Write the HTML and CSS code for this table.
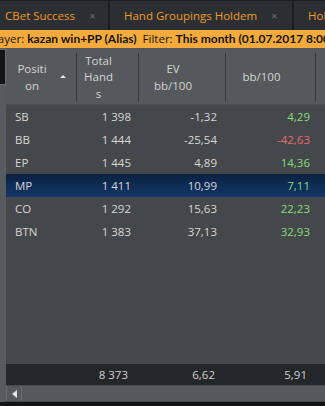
FILE: index.html
```html
<!DOCTYPE html>
<html>
<head>
<meta charset="utf-8">
<link rel="stylesheet" href="styles.css">
</head>
<body>
<div class="app">
  <div class="tabs">
    <div class="tab tab-1"><span class="tab-title">CBet Success</span><span class="close">✕</span></div>
    <div class="tab tab-2"><span class="tab-title">Hand Groupings Holdem</span><span class="close">✕</span></div>
    <div class="tab tab-3"><span class="tab-title">Holdem</span></div>
  </div>
  <div class="filter"><span class="lbl">Player:</span> <b>kazan win+PP (Alias)</b>&nbsp;&nbsp;<span class="lbl">Filter:</span> <b>This month (01.07.2017 8:00 to 31.07.2017 8:00)</b></div>
  <div class="main">
    <div class="side"><div class="side-block"></div></div>
    <div class="grid">
      <div class="head">
        <div class="hc c1"><span class="ht">Position</span><span class="sort"></span></div>
        <div class="hc c2"><span class="ht">Total Hands</span></div>
        <div class="hc c3"><span class="ht ev">EV bb/100</span></div>
        <div class="hc c4"><span class="ht wide">bb/100</span></div>
        <div class="hc c5"></div>
      </div>
      <div class="body">
        <div class="row"><span class="d c1">SB</span><span class="d c2">1 398</span><span class="d c3">-1,32</span><span class="d c4 pos">4,29</span></div>
        <div class="row"><span class="d c1">BB</span><span class="d c2">1 444</span><span class="d c3">-25,54</span><span class="d c4 neg">-42,63</span></div>
        <div class="row"><span class="d c1">EP</span><span class="d c2">1 445</span><span class="d c3">4,89</span><span class="d c4 pos">14,36</span></div>
        <div class="row sel"><span class="d c1">MP</span><span class="d c2">1 411</span><span class="d c3">10,99</span><span class="d c4 pos">7,11</span></div>
        <div class="row"><span class="d c1">CO</span><span class="d c2">1 292</span><span class="d c3">15,63</span><span class="d c4 pos">22,23</span></div>
        <div class="row"><span class="d c1">BTN</span><span class="d c2">1 383</span><span class="d c3">37,13</span><span class="d c4 pos">32,93</span></div>
      </div>
      <div class="total"><span class="d c1"></span><span class="d c2">8 373</span><span class="d c3">6,62</span><span class="d c4">5,91</span></div>
      <div class="hscroll"><div class="sbtn"><span class="arrow"></span></div><div class="track"></div></div>
    </div>
  </div>
</div>
</body>
</html>
```
FILE: styles.css
```css
* { box-sizing: border-box; }
html, body { margin: 0; padding: 0; }
body {
  width: 325px;
  height: 406px;
  overflow: hidden;
  background: #111315;
  font-family: "Open Sans", "Noto Sans", sans-serif;
  font-size: 11.5px;
}
.app { display: flex; flex-direction: column; height: 402px; }

.tabs {
  display: flex;
  height: 30px;
  gap: 2px;
  background: #1c1e21;
  padding-top: 1px;
  flex: none;
}
.tab {
  display: flex;
  align-items: center;
  background: #2c2f32;
  color: #ee9a2c;
  font-size: 11.5px;
  white-space: nowrap;
  overflow: hidden;
}
.tab-1 { width: 108px; padding-left: 5px; }
.tab-2 { width: 182px; padding-left: 14px; }
.tab-3 { flex: 1; padding-left: 14px; }
.close { color: #6c6f72; font-size: 8px; margin-left: 14px; }

.filter {
  height: 18px;
  flex: none;
  background: #f4aa3c;
  color: #141414;
  font-size: 11.5px;
  line-height: 18px;
  white-space: nowrap;
  overflow: hidden;
  text-indent: -12px;
}
.filter b { font-family: "Lato", "Open Sans", sans-serif; font-weight: 700; font-size: 12px; }

.main { flex: 1; display: flex; min-height: 0; }
.side {
  width: 6px;
  flex: none;
  background: #585b5e;
  padding-top: 1px;
}
.side-block {
  height: 36px;
  background: #121416;
  border: 1px solid #6a6d70;
  border-left: none;
}
.grid { flex: 1; display: flex; flex-direction: column; min-width: 0; }

.head {
  display: flex;
  height: 57px;
  flex: none;
  background: #56595c;
  border-bottom: 1px solid #4d5053;
  padding: 5px 0 2px;
}
.hc {
  display: flex;
  flex: none;
  align-items: center;
  justify-content: center;
  border-right: 1px solid #36393c;
  padding-right: 18px;
  position: relative;
  color: #d4d4d4;
  line-height: 16.5px;
  text-align: center;
}
.ht { width: 33px; word-break: break-all; }
.ht.ev { width: 44px; word-break: normal; }
.ht.wide { width: auto; }
.c1 { width: 71px; }
.c2 { width: 62px; }
.c3 { width: 87px; }
.c4 { width: 90px; }
.hc.c5 { flex: 1; border-right: none; padding-right: 0; }
.sort {
  position: absolute;
  right: 10px;
  top: 22px;
  width: 0; height: 0;
  border-left: 3.5px solid transparent;
  border-right: 3.5px solid transparent;
  border-bottom: 3.5px solid #e6e6e6;
}

.body { flex: 1; background: #45484b; min-height: 0; }
.row { display: flex; height: 23px; align-items: center; color: #d6d6d6; }
.row.sel { background: linear-gradient(#0a2142, #133767); }
.d { display: block; flex: none; text-align: right; white-space: nowrap; }
.d.c1 { text-align: left; padding-left: 9px; }
.row .d.c2 { padding-right: 8px; }
.row .d.c3 { padding-right: 9px; }
.row .d.c4 { padding-right: 6px; }
.pos { color: #84de78; }
.neg { color: #e46c6c; }

.total {
  display: flex;
  height: 21px;
  flex: none;
  align-items: center;
  background: #24272a;
  color: #d0d0d0;
}
.total .d.c2 { padding-right: 11px; }
.total .d.c3 { padding-right: 11px; }
.total .d.c4 { padding-right: 9px; }

.hscroll {
  height: 17px;
  flex: none;
  display: flex;
  background: #56595c;
  border-top: 1px solid #4a4d50;
  border-bottom: 1px solid #44474a;
}
.sbtn {
  width: 16px;
  display: flex;
  align-items: center;
  justify-content: center;
  border-right: 1px solid #6b6e71;
  border-left: 1px solid #6b6e71;
}
.arrow {
  width: 0; height: 0;
  border-top: 4px solid transparent;
  border-bottom: 4px solid transparent;
  border-right: 5px solid #e4e4e4;
}
.track { flex: 1; }
```
